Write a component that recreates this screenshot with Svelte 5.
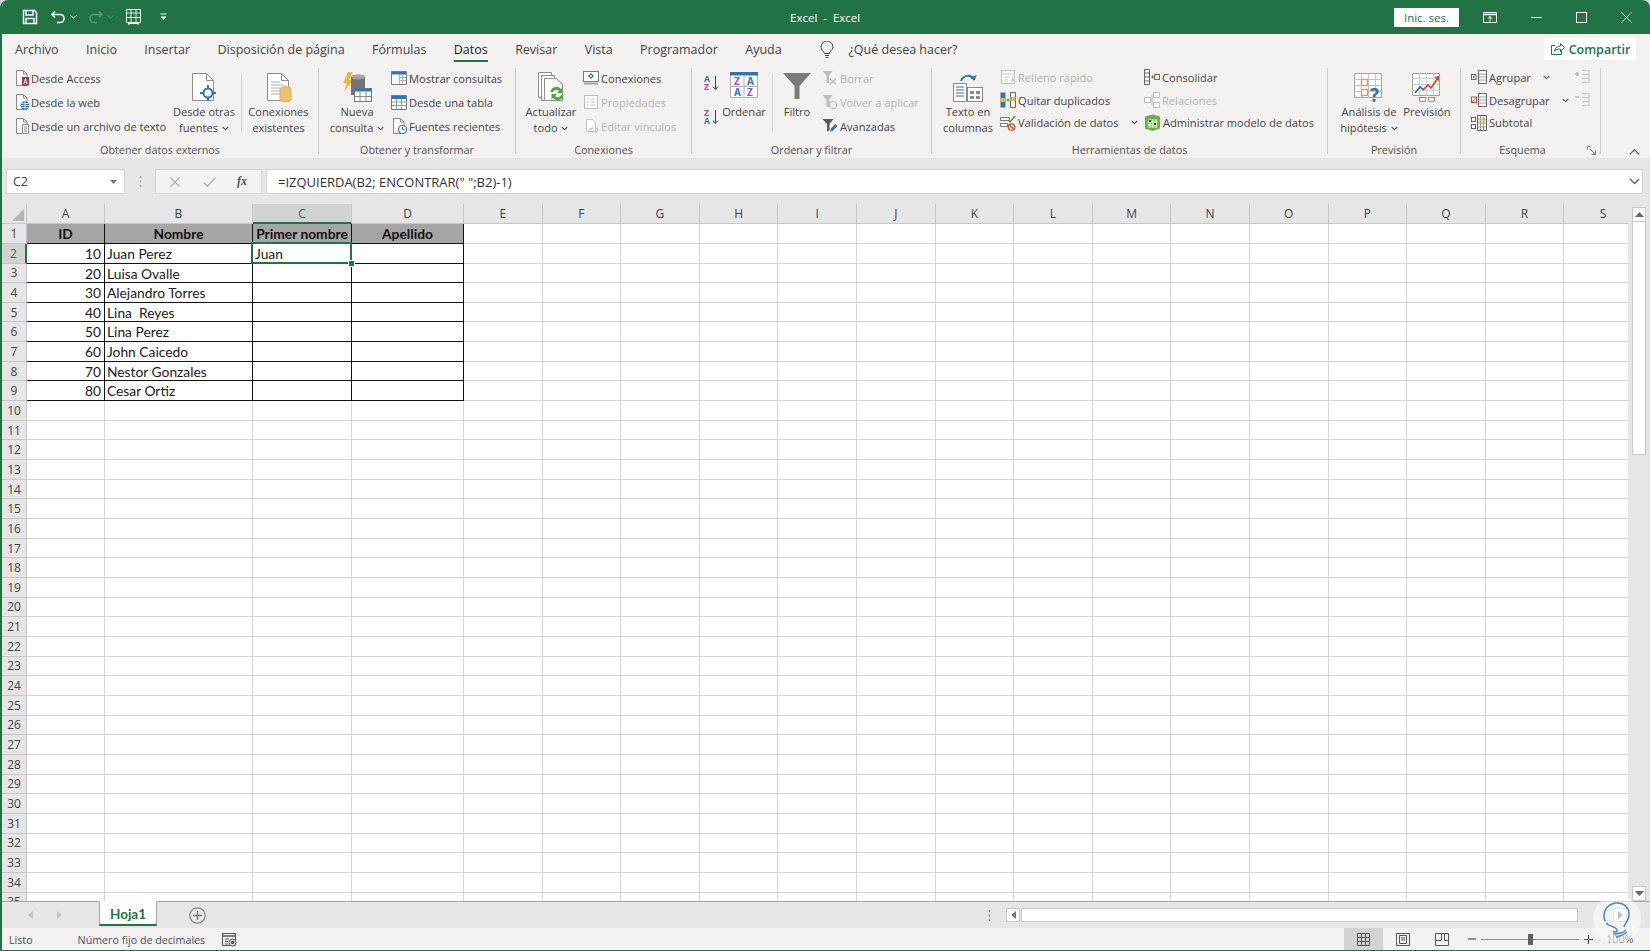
<script>
  const tabs = ['Archivo','Inicio','Insertar','Disposición de página','Fórmulas','Datos','Revisar','Vista','Programador','Ayuda'];
  const letters = 'ABCDEFGHIJKLMNOPQRS'.split('');
  const rows = Array.from({ length: 35 }, (_, i) => i + 1);
  const people = ['Juan Perez','Luisa Ovalle','Alejandro Torres','Lina  Reyes','Lina Perez','John Caicedo','Nestor Gonzales','Cesar Ortiz'];
  const headers = { A: 'ID', B: 'Nombre', C: 'Primer nombre', D: 'Apellido' };
  function text(c, r) {
    if (r === 1) return headers[c] ?? '';
    if (r > 9) return '';
    if (c === 'A') return String((r - 1) * 10);
    if (c === 'B') return people[r - 2];
    if (c === 'C' && r === 2) return 'Juan';
    return '';
  }
  const inTable = (c, r) => r <= 9 && 'ABCD'.includes(c);
</script>

{#snippet chev()}
  <svg class="chev" width="7" height="5" viewBox="0 0 7 5"><path d="M.7 1l2.8 2.6L6.3 1" fill="none" stroke="#555" stroke-width="1.1"/></svg>
{/snippet}
{#snippet doc()}
  <path d="M2.5.5h7l3.5 3.500v11.500H2.500z" fill="#fff" stroke="#8a8a8a"/><path d="M9.500.5V4H13" fill="none" stroke="#8a8a8a"/>
{/snippet}
{#snippet bigdoc()}
  <path d="M4.500 1.500h14l7 7v20h-21z" fill="#fff" stroke="#8f8f8f"/><path d="M18.500 1.500v7h7" fill="none" stroke="#8f8f8f"/>
{/snippet}

<div class="win">
  <header class="title">
    <div class="qat">
      <svg class="q1" width="16" height="16" viewBox="0 0 16 16"><path d="M1.500 1.500h11l2 2v11h-13z" fill="none" stroke="#fff" stroke-width="1.500"/><path d="M4 2v4h7V2M4 14V9.500h8V14" fill="none" stroke="#fff" stroke-width="1.400"/></svg>
      <svg class="q2" width="15" height="14" viewBox="0 0 15 14"><path d="M4 1.500 1 4.500l3 3" fill="none" stroke="#fff" stroke-width="1.600"/><path d="M1.500 4.500H9a4 4 0 0 1 0 8H6" fill="none" stroke="#fff" stroke-width="1.600"/></svg>
      <svg class="q3" width="7" height="4" viewBox="0 0 7 4"><path d="M.5.500l3 2.500 3-2.500" fill="none" stroke="#fff"/></svg>
      <svg class="q4" width="15" height="14" viewBox="0 0 15 14"><path d="M11 1.500l3 3-3 3" fill="none" stroke="#5d977a" stroke-width="1.600"/><path d="M13.500 4.500H6a4 4 0 0 0 0 8h3" fill="none" stroke="#5d977a" stroke-width="1.600"/></svg>
      <svg class="q3" width="7" height="4" viewBox="0 0 7 4"><path d="M.5.500l3 2.500 3-2.500" fill="none" stroke="#5d977a"/></svg>
      <svg class="q5" width="17" height="17" viewBox="0 0 17 17"><path d="M1.500.5h14v13h-14z" fill="none" stroke="#fff"/><path d="M1.500 4h14M6 .5v13M11 .5v13M1.500 8.500h14" stroke="#d9e7df" fill="none"/><path d="M3 14.500h11M3 14.500l2-1.500M3 14.500l2 1.500M14 14.500l-2-1.500M14 14.500l-2 1.500" stroke="#fff" fill="none"/></svg>
      <svg class="q6" width="7" height="8" viewBox="0 0 7 8"><path d="M.5 1h6" stroke="#fff"/><path d="M.5 3.500h6l-3 3.500z" fill="#fff"/></svg>
    </div>
    <div class="doc-title">Excel  -  Excel</div>
    <div class="signin">Inic. ses.</div>
    <svg class="w1" width="14" height="11" viewBox="0 0 14 11"><path d="M.5.500h13v10H.5z" fill="none" stroke="#fff"/><path d="M.5 2.500h13" stroke="#fff" stroke-width="1.500"/><path d="M7 9.500V4.500M5 6.500l2-2 2 2" fill="none" stroke="#fff"/></svg>
    <svg class="w2" width="11" height="11" viewBox="0 0 11 11"><path d="M0 5.500h11" stroke="#fff"/></svg>
    <svg class="w3" width="11" height="11" viewBox="0 0 11 11"><rect x=".5" y=".5" width="10" height="10" fill="none" stroke="#fff"/></svg>
    <svg class="w4" width="11" height="11" viewBox="0 0 11 11"><path d="M.5.500l10 10M10.500.5l-10 10" stroke="#fff"/></svg>
  </header>

  <nav class="tabs">
    {#each tabs as t}
      <span class="tab" class:active={t === 'Datos'}>{t}</span>
    {/each}
    <svg class="bulb" width="14" height="18" viewBox="0 0 14 18"><path d="M4.500 12.500C4 10 1 9 1 6a6 6 0 0 1 12 0c0 3-3 4-3.500 6.500z" fill="none" stroke="#444"/><path d="M5 14.500h4M5.500 16.500h3" stroke="#444"/></svg>
    <span class="ask">¿Qué desea hacer?</span>
    <div class="share">
      <svg width="15" height="14" viewBox="0 0 15 14"><path d="M5 3.500H1.500v9h10V9" fill="none" stroke="#217346"/><path d="M4.500 9c.5-3 3-5 6-5V1.500l4 4-4 4V7c-2.500 0-4.500.5-6 2z" fill="none" stroke="#217346"/></svg>
      Compartir
    </div>
  </nav>

  <section class="ribbon">
    <div class="grp g1">
      <div class="body">
        <div class="col c1">
          <div class="item"><svg width="16" height="16" viewBox="0 0 16 16">{@render doc()}<rect x="8" y="7" width="7" height="8.500" fill="#a4373a"/><path d="M9.800 14l1.700-5.500 1.700 5.500M10.500 12.300h2" stroke="#fff" fill="none" stroke-width=".9"/></svg>Desde Access</div>
          <div class="item"><svg width="16" height="16" viewBox="0 0 16 16">{@render doc()}<circle cx="11" cy="11.500" r="4.300" fill="#2e75b6"/><path d="M6.800 11.500h8.400M7.500 9.500h7M7.500 13.500h7M11 7.500v8" stroke="#fff" stroke-width=".7"/></svg>Desde la web</div>
          <div class="item"><svg width="16" height="16" viewBox="0 0 16 16">{@render doc()}<path d="M8.500 6.500h6v9h-6z" fill="#fff" stroke="#8a8a8a"/><path d="M10 9h3M10 11h3M10 13h3" stroke="#8a8a8a"/></svg>Desde un archivo de texto</div>
        </div>
        <div class="big b74">
          <svg width="32" height="32" viewBox="0 0 32 32">{@render bigdoc()}<circle cx="20" cy="21" r="4.500" fill="#fff" stroke="#2e75b6" stroke-width="2"/><path d="M20 13v4M20 25v4M12 21h4M24 21h4" stroke="#2e75b6" stroke-width="2"/></svg>
          <div class="lbl">Desde otras<br>fuentes {@render chev()}</div>
        </div>
        <i class="vsep"></i>
        <div class="big b73">
          <svg width="32" height="32" viewBox="0 0 32 32">{@render bigdoc()}<path d="M8 10h9M8 13h13M8 16h9M8 19h9M8 22h9" stroke="#b0b0b0"/><path d="M17 17c0-3 11-3 11 0v11c0 2-11 2-11 0z" fill="#eec16f" stroke="#e0ad54"/></svg>
          <div class="lbl">Conexiones<br>existentes</div>
        </div>
      </div>
      <div class="glabel">Obtener datos externos</div>
    </div>
    <i class="sep"></i>

    <div class="grp g2">
      <div class="body">
        <div class="big b60">
          <svg width="34" height="32" viewBox="0 0 34 32"><path d="M8 0 3 11h4l-3 9 9-12H9l4-8z" fill="#efb73e"/><path d="M11 5c0-3 14-3 14 0v18H11z" fill="#737373"/><ellipse cx="18" cy="5" rx="7" ry="2.500" fill="#a5a5a5"/><rect x="14.500" y="16.500" width="17" height="13" fill="#fff" stroke="#7a7a7a"/><path d="M14.500 16.500h17v3h-17z" fill="#2e75b6"/><path d="M20 20v9M26 20v9M15 24.500h16" stroke="#8a8a8a"/></svg>
          <div class="lbl">Nueva<br>consulta {@render chev()}</div>
        </div>
        <div class="col c2">
          <div class="item"><svg width="16" height="16" viewBox="0 0 16 16"><path d="M.5 1.500h15v13H.5z" fill="#fff" stroke="#7a7a7a"/><path d="M1 2h14v2.500H1z" fill="#2e75b6"/><path d="M8.500 5v9M11.500 5v9M9 7.500h6M9 10.500h6" stroke="#b0b0b0"/></svg>Mostrar consultas</div>
          <div class="item"><svg width="16" height="16" viewBox="0 0 16 16"><path d="M.5 1.500h15v14H.5z" fill="#fff" stroke="#7a7a7a"/><path d="M1 2h14v3H1z" fill="#2e75b6"/><path d="M5.500 5v10M10.500 5v10M1 8h14M1 11.500h14" stroke="#9a9a9a"/></svg>Desde una tabla</div>
          <div class="item"><svg width="16" height="16" viewBox="0 0 16 16">{@render doc()}<circle cx="11.500" cy="11.500" r="4" fill="#fff" stroke="#2e75b6" stroke-width="1.200"/><path d="M11.500 9v2.700h2" fill="none" stroke="#2e75b6"/></svg>Fuentes recientes</div>
        </div>
      </div>
      <div class="glabel">Obtener y transformar</div>
    </div>
    <i class="sep"></i>

    <div class="grp g3">
      <div class="body">
        <div class="big b60">
          <svg width="32" height="32" viewBox="0 0 32 32"><path d="M3.500.5h13v3h-10v22h-3z" fill="#fff" stroke="#8f8f8f"/><path d="M6.500 3.500h13v3h-10v22h-3z" fill="#fff" stroke="#8f8f8f"/><path d="M9.500 6.500h12l6 6v16h-18z" fill="#fff" stroke="#8f8f8f"/><path d="M15.500 20a6 6 0 0 1 10.500-3l1.500-1.500V21h-5.500l2-2a3.500 3.500 0 0 0-6 1z" fill="#4ea72e"/><path d="M28.500 23a6 6 0 0 1-10.500 3l-1.500 1.500V22H22l-2 2a3.500 3.500 0 0 0 6-1z" fill="#4ea72e"/></svg>
          <div class="lbl">Actualizar<br>todo {@render chev()}</div>
        </div>
        <div class="col c3">
          <div class="item"><svg width="16" height="16" viewBox="0 0 16 16"><rect x=".5" y="1.500" width="15" height="10" fill="#fff" stroke="#7a7a7a"/><path d="M8 3l3 3-3 3-3-3z" fill="#2e75b6"/><circle cx="8" cy="6" r="1" fill="#fff"/><path d="M1 12.500h14v2H1z" fill="#a0a0a0"/></svg>Conexiones</div>
          <div class="item off"><svg width="16" height="16" viewBox="0 0 16 16"><rect x="1.500" y="1.500" width="13" height="13" fill="#fff" stroke="#bdbdbd"/><path d="M4 5h2M8 5h4M4 8h2M8 8h4M4 11h2M8 11h4" stroke="#bdbdbd"/></svg>Propiedades</div>
          <div class="item off"><svg width="16" height="16" viewBox="0 0 16 16"><path d="M3.500 1.500h6l3 3v9h-9z" fill="#fff" stroke="#c4c4c4"/><path d="M7 12a2 2 0 0 1 2-2h1M15 12a2 2 0 0 0-2-2h-1M7 12a2 2 0 0 0 2 2h1M15 12a2 2 0 0 1-2 2h-1" fill="none" stroke="#b0b0b0"/></svg>Editar vínculos</div>
        </div>
      </div>
      <div class="glabel">Conexiones</div>
    </div>
    <i class="sep"></i>

    <div class="grp g4">
      <div class="body">
        <div class="sort">
          <svg width="18" height="18" viewBox="0 0 18 18"><text x="1" y="8" class="az blue">A</text><text x="1" y="16" class="az purple">Z</text><path d="M12.500 2v13M10 12.500l2.500 3 2.500-3" fill="none" stroke="#444"/></svg>
          <svg width="18" height="18" viewBox="0 0 18 18"><text x="1" y="8" class="az purple">Z</text><text x="1" y="16" class="az blue">A</text><path d="M12.500 2v13M10 12.500l2.500 3 2.500-3" fill="none" stroke="#444"/></svg>
        </div>
        <div class="big b44">
          <svg width="28" height="28" viewBox="0 0 28 28"><rect x=".5" y=".5" width="27" height="25" fill="#fff" stroke="#b0b0b0"/><path d="M0 0h28v3.500H0z" fill="#2e75b6"/><path d="M14 4v22M1 14.500h26" stroke="#b0b0b0"/><text x="4" y="13" class="az2 purple">Z</text><text x="17" y="13" class="az2 blue">A</text><text x="4" y="24" class="az2 blue">A</text><text x="17" y="24" class="az2 purple">Z</text></svg>
          <div class="lbl one">Ordenar</div>
        </div>
        <i class="vsep v2"></i>
        <div class="big b40">
          <svg width="28" height="28" viewBox="0 0 28 28"><path d="M0 1h28L16.500 14v13h-5V14z" fill="#7b7b7b"/></svg>
          <div class="lbl one">Filtro</div>
        </div>
        <div class="col c4">
          <div class="item off"><svg width="16" height="16" viewBox="0 0 16 16"><path d="M.5 1h10L7 6v7H4.500V6z" fill="#bdbdbd"/><path d="M8 8.500l6 6M14 8.500l-6 6" stroke="#bdbdbd" stroke-width="1.200"/></svg>Borrar</div>
          <div class="item off"><svg width="16" height="16" viewBox="0 0 16 16"><path d="M.5 1h10L7 6v7H4.500V6z" fill="#bdbdbd"/><circle cx="11" cy="11" r="3.500" fill="none" stroke="#bdbdbd" stroke-width="1.200"/></svg>Volver a aplicar</div>
          <div class="item"><svg width="16" height="16" viewBox="0 0 16 16"><path d="M.5 1h11L7.500 6v7H5V6z" fill="#5a5a5a"/><path d="M8 14l1-3.500 4.500-4.500 2 2-4.500 4.500z" fill="#2e75b6"/></svg>Avanzadas</div>
        </div>
      </div>
      <div class="glabel">Ordenar y filtrar</div>
    </div>
    <i class="sep"></i>

    <div class="grp g5">
      <div class="body">
        <div class="big b64">
          <svg width="32" height="32" viewBox="0 0 32 32"><path d="M9 9c2-6 10-7 13-2" fill="none" stroke="#2e75b6" stroke-width="2"/><path d="M18 6.500l5 2 1-6z" fill="#2e75b6" transform="rotate(10 22 6)"/><path d="M1.500 11.500h13v18h-13z" fill="#fff" stroke="#8a8a8a"/><path d="M4 15h8M4 18h8M4 21h8M4 24h8" stroke="#2e75b6" stroke-width="1.200"/><rect x="15.500" y="15.500" width="15" height="14" fill="#fff" stroke="#8a8a8a"/><path d="M18 19h4v3h-4zM24 19h4v3h-4zM18 24h4v3h-4zM24 24h4v3h-4z" fill="#8a8a8a"/></svg>
          <div class="lbl">Texto en<br>columnas</div>
        </div>
        <div class="col tight c5">
          <div class="item off"><svg width="16" height="16" viewBox="0 0 16 16"><rect x="1.500" y="1.500" width="13" height="13" fill="#fff" stroke="#c4c4c4"/><path d="M1.500 5h13M4 8h6M4 11h4" stroke="#c4c4c4"/><path d="M12 7l3 4-4 3z" fill="#c9c9c9"/></svg>Relleno rápido</div>
          <div class="item"><svg width="16" height="16" viewBox="0 0 16 16"><path d="M.5.500h5v15h-5z" fill="#2e75b6"/><path d="M10.500.5h5v15h-5z" fill="#fff" stroke="#666"/><path d="M.5 6h5v4h-5zM10.500 5h5v4h-5z" fill="#efb73e"/><path d="M6.500 8h3M8 6.500v3" stroke="#2e75b6"/></svg>Quitar duplicados</div>
          <div class="item"><svg width="16" height="16" viewBox="0 0 16 16"><path d="M.5 2.500h9v3h-9zM.5 8.500h7v3h-7z" fill="#fff" stroke="#7a7a7a"/><path d="M8 5l2 2 5-6" fill="none" stroke="#4ea72e" stroke-width="1.500"/><circle cx="11.500" cy="12" r="3.200" fill="#fff" stroke="#d24726" stroke-width="1.300"/><path d="M9.500 10l4 4" stroke="#d24726" stroke-width="1.200"/></svg>Validación de datos<span class="gapchev">{@render chev()}</span></div>
        </div>
        <div class="col tight c6">
          <div class="item"><svg width="16" height="16" viewBox="0 0 16 16"><path d="M.5.500h5v15h-5z" fill="#fff" stroke="#666"/><path d="M.5 4h5M.5 8h5M.5 12h5" stroke="#666"/><path d="M7 8h3M8.500 6.500v3" stroke="#2e75b6"/><rect x="10.500" y="5.500" width="5" height="5" fill="#fff" stroke="#d24726"/></svg>Consolidar</div>
          <div class="item off"><svg width="16" height="16" viewBox="0 0 16 16"><rect x=".5" y="5.500" width="6" height="5" fill="#fff" stroke="#bdbdbd"/><rect x="9.500" y=".5" width="6" height="5" fill="#fff" stroke="#bdbdbd"/><rect x="9.500" y="10.500" width="6" height="5" fill="#fff" stroke="#bdbdbd"/><path d="M6.500 8h3M8 3v10" stroke="#bdbdbd"/></svg>Relaciones</div>
          <div class="item"><svg width="17" height="17" viewBox="0 0 17 17"><path d="M1 2.500 8.500.5 16 2.500v12l-7.500 2.500L1 14.500z" fill="#70ad47"/><path d="M3.500 5h10v9h-10z" fill="#fff" fill-opacity=".25"/><path d="M6 5v9M9 5v9M12 5v9M4 8h9M4 11h9" stroke="#fff" stroke-width=".8"/><path d="M5 6h2v2H5zM10 9h2v2h-2z" fill="#1e6b3c"/></svg>Administrar modelo de datos</div>
        </div>
      </div>
      <div class="glabel">Herramientas de datos</div>
    </div>
    <i class="sep"></i>

    <div class="grp g6">
      <div class="body">
        <div class="big b76">
          <svg width="30" height="32" viewBox="0 0 30 32"><path d="M.5 1.500h27v24H.5z" fill="#fff" stroke="#a0a0a0"/><path d="M.5 7.500h27M.5 13.500h27M.5 19.500h27M7.500 1.500v24M14.500 1.500v24M21.500 1.500v24" stroke="#c4c4c4" fill="none"/><rect x="7.500" y="7.500" width="6" height="6" fill="#fff" stroke="#ed9a3a" stroke-width="1.300"/><rect x="7.500" y="17.500" width="6" height="6" fill="#fff" stroke="#ed9a3a" stroke-width="1.300"/><text x="16" y="30" class="q">?</text></svg>
          <div class="lbl">Análisis de<br>hipótesis {@render chev()}</div>
        </div>
        <div class="big b40">
          <svg width="30" height="32" viewBox="0 0 30 32"><path d="M.5 1.500h27v22H.5z" fill="#fff" stroke="#a0a0a0"/><path d="M.5 6.500h27M.5 12.500h27M.5 18.500h27M7.500 1.500v22M14.500 1.500v22M21.500 1.500v22" stroke="#d0d0d0" fill="none"/><path d="M3 21l5-6 4 3" fill="none" stroke="#2e75b6" stroke-width="1.700"/><path d="M11 18l5-5 3 3 7-10" fill="none" stroke="#d24726" stroke-width="1.700"/><path d="M22 5l5-1v5z" fill="#d24726"/><path d="M7 25.500h7l-1 4H8zM16 25.500h7l-1 4h-5z" fill="#fff" stroke="#8a8a8a"/></svg>
          <div class="lbl">Previsión</div>
        </div>
      </div>
      <div class="glabel">Previsión</div>
    </div>
    <i class="sep"></i>

    <div class="grp g7">
      <div class="body">
        <div class="col tight c7">
          <div class="item"><svg width="16" height="16" viewBox="0 0 16 16"><rect x=".5" y="5.500" width="4.500" height="5" fill="#fff" stroke="#666"/><path d="M1.500 8h2.500M2.750 6.800v2.400" stroke="#2e75b6" stroke-width=".8"/><path d="M7.500 1.500h8v13h-8z" fill="#fff" stroke="#666"/><path d="M8 5h7M8 8h7M8 11h7" stroke="#7aa5cc"/></svg>Agrupar<span class="c-a">{@render chev()}</span></div>
          <div class="item"><svg width="16" height="16" viewBox="0 0 16 16"><rect x=".5" y="5" width="5" height="5.500" fill="#fff" stroke="#d24726"/><path d="M.5 10.500l5-5.500" stroke="#d24726"/><path d="M7.500 1.500h8v13h-8z" fill="#fff" stroke="#666"/><path d="M8 5h7M8 8h7M8 11h7" stroke="#7aa5cc"/></svg>Desagrupar<span class="c-a">{@render chev()}</span></div>
          <div class="item"><svg width="16" height="16" viewBox="0 0 16 16"><rect x=".5" y="2.500" width="4" height="4" fill="#fff" stroke="#666"/><rect x=".5" y="9.500" width="4" height="4" fill="#fff" stroke="#666"/><path d="M6.500.5h9v15h-9z" fill="#fff" stroke="#666"/><path d="M9.500 1v14M12.500 1v14M7 4h8M7 8h8M7 12h8" stroke="#999"/><path d="M7 4.500h8v3H7z" fill="#efb73e" fill-opacity=".5"/></svg>Subtotal</div>
        </div>
        <div class="detail">
          <svg width="15" height="16" viewBox="0 0 15 16"><path d="M0 5h4M2 3v4" stroke="#b5b5b5" stroke-width="1.500"/><path d="M7 1.500h7M7 5.500h7M7 9.500h7M7 13.500h7" stroke="#c4c4c4"/><path d="M14 1v13" stroke="#c4c4c4"/></svg>
          <svg width="15" height="16" viewBox="0 0 15 16"><path d="M0 5h4" stroke="#b5b5b5" stroke-width="1.500"/><path d="M7 1.500h7M7 5.500h7M7 9.500h7M7 13.500h7" stroke="#c4c4c4"/><path d="M14 1v13" stroke="#c4c4c4"/></svg>
        </div>
      </div>
      <div class="glabel lastlabel">Esquema
        <svg class="launch" width="9" height="9" viewBox="0 0 9 9"><path d="M.5 3.500v-3h3M3 3l5 5M4.500 8.500h4v-4" fill="none" stroke="#777"/></svg>
      </div>
    </div>
    <i class="sep"></i>
    <svg class="collapse" width="11" height="6" viewBox="0 0 11 6"><path d="M.7 5.300 5.500.8l4.800 4.500" fill="none" stroke="#555" stroke-width="1.100"/></svg>
  </section>

  <section class="fbar">
    <div class="namebox"><span>C2</span><svg width="7" height="4" viewBox="0 0 7 4"><path d="M0 0h7L3.500 4z" fill="#777"/></svg></div>
    <svg class="dots" width="3" height="11" viewBox="0 0 3 11"><path d="M1.500 0v2M1.500 4.500v2M1.500 9v2" stroke="#aaa" stroke-width="1.500"/></svg>
    <div class="fxbox">
      <svg width="10" height="10" viewBox="0 0 10 10"><path d="M.5.500l9 9M9.500.5l-9 9" stroke="#b0b0b0" stroke-width="1.200"/></svg>
      <svg width="13" height="10" viewBox="0 0 13 10"><path d="M.7 5.500l3.800 3.800L12.300.7" fill="none" stroke="#b0b0b0" stroke-width="1.400"/></svg>
      <span class="fx">fx</span>
    </div>
    <div class="finput"><span>=IZQUIERDA(B2; ENCONTRAR(" ";B2)-1)</span><svg width="11" height="7" viewBox="0 0 11 7"><path d="M1 1l4.500 4.500L10 1" fill="none" stroke="#666" stroke-width="1.500"/></svg></div>
  </section>

  <main class="sheet">
    <div class="gridclip">
      <div class="grid">
        <div class="corner"><svg width="12" height="12" viewBox="0 0 12 12"><path d="M12 0v12H0z" fill="#b5b5b5"/></svg></div>
        {#each letters as c}
          <div class="ch" class:sel={c === 'C'}>{c}</div>
        {/each}
        {#each rows as r}
          <div class="rh" class:sel={r === 2}>{r}</div>
          {#each letters as c}
            <div class="cell" class:t={inTable(c, r)} class:head={inTable(c, r) && r === 1} class:num={c === 'A' && r > 1}>{text(c, r)}{#if c === 'C' && r === 2}<i class="cursor"></i><i class="handle"></i>{/if}</div>
          {/each}
        {/each}
      </div>
    </div>
    <aside class="vbar">
      <div class="sbtn"><svg width="9" height="5" viewBox="0 0 9 5"><path d="M4.500 0 9 5H0z" fill="#666"/></svg></div>
      <div class="vthumb"></div>
      <div class="vspace"></div>
      <div class="sbtn"><svg width="9" height="5" viewBox="0 0 9 5"><path d="M0 0h9L4.500 5z" fill="#666"/></svg></div>
    </aside>
  </main>

  <section class="tabbar">
    <svg class="nav" width="5" height="8" viewBox="0 0 5 8"><path d="M5 0v8L0 4z" fill="#c4c4c4"/></svg>
    <svg class="nav n2" width="5" height="8" viewBox="0 0 5 8"><path d="M0 0v8l5-4z" fill="#c4c4c4"/></svg>
    <div class="sheettab">Hoja1</div>
    <svg class="add" width="17" height="17" viewBox="0 0 17 17"><circle cx="8.500" cy="8.500" r="7.700" fill="none" stroke="#8a8a8a" stroke-width="1.300"/><path d="M8.500 4v9M4 8.500h9" stroke="#777" stroke-width="1.300"/></svg>
    <svg class="tdots" width="3" height="11" viewBox="0 0 3 11"><path d="M1.500 0v2M1.500 4.500v2M1.500 9v2" stroke="#888" stroke-width="1.500"/></svg>
    <div class="hbtn"><svg width="5" height="8" viewBox="0 0 5 8"><path d="M5 0v8L0 4z" fill="#777"/></svg></div>
    <div class="hthumb"></div>
    <div class="hbtn right"><svg width="5" height="8" viewBox="0 0 5 8"><path d="M0 0v8l5-4z" fill="#777"/></svg></div>
  </section>

  <footer class="status">
    <span class="listo">Listo</span>
    <span class="fixed">Número fijo de decimales</span>
    <svg class="macro" width="15" height="14" viewBox="0 0 15 14"><path d="M.5.500h13v12H.5z" fill="none" stroke="#555"/><path d="M1 3h12" stroke="#555" stroke-width="1.500"/><path d="M3 6h4M3 8.500h3M3 11h3" stroke="#555"/><circle cx="10.500" cy="9.500" r="3.500" fill="#f3f2f1" stroke="#555"/><circle cx="10.500" cy="9.500" r="1.800" fill="#555"/></svg>
    <div class="view on"><svg width="13" height="13" viewBox="0 0 13 13"><path d="M.5.500h12v12H.5zM4.500.5v12M8.500.5v12M.5 4.500h12M.5 8.500h12" fill="none" stroke="#555"/></svg></div>
    <div class="view"><svg width="14" height="13" viewBox="0 0 14 13"><path d="M.5.500h13v12H.5z" fill="none" stroke="#555"/><path d="M3.500 2.500h7v8h-7z" fill="none" stroke="#555"/><path d="M5 5h4M5 7h4" stroke="#555"/></svg></div>
    <div class="view"><svg width="14" height="13" viewBox="0 0 14 13"><path d="M.5.500h13v12H.5zM.5 7.500h6V.5M9.500.5v7h4" fill="none" stroke="#555"/></svg></div>
    <div class="zoom">
      <svg width="8" height="2" viewBox="0 0 8 2"><path d="M0 1h8" stroke="#555" stroke-width="1.300"/></svg>
      <div class="slider"><i></i></div>
      <svg width="9" height="9" viewBox="0 0 9 9"><path d="M0 4.500h9M4.500 0v9" stroke="#555" stroke-width="1.200"/></svg>
      <span class="pct">100%</span>
    </div>
  </footer>

  <svg class="mark" width="54" height="54" viewBox="0 0 54 54"><circle cx="27" cy="25" r="24" fill="#fff" fill-opacity=".55"/><path d="M15 27c-3-8 1-16 10-18 9-1 15 5 14 13-1 5-4 7-5 11M16 29c3 4 10 3 11 7 1 3-3 2-4 1M23 40c5 0 10-1 13-4M26 43c4-1 8-2 11-5" fill="none" stroke="#4c86c6" stroke-width="1.500"/></svg>
</div>

<style>
  :global(body) { margin: 0; background: #d9d9d9; }
  .win {
    position: relative; width: 1650px; height: 951px; box-sizing: border-box; overflow: hidden;
    border-left: 2px solid #217346; border-bottom: 1px solid #217346; border-radius: 8px 8px 0 0;
    background: #f3f2f1; font: 12px "Open Sans", sans-serif; color: #444; display: flex; flex-direction: column;
  }
  svg { display: block; flex: none; }

  .title { height: 34px; flex: none; margin-left: -2px; padding-left: 2px; background: #217346; display: flex; align-items: center; color: #fff; }
  .qat { display: flex; align-items: center; width: 170px; padding-left: 20px; box-sizing: border-box; }
  .q2 { margin-left: 13px; } .q3 { margin-left: 4px; } .q4 { margin-left: 11px; } .q5 { margin-left: 11px; } .q6 { margin-left: 18px; }
  .doc-title { margin-left: 618px; width: 70px; white-space: pre; font-size: 11.500px; text-align: center; }
  .signin { margin-left: 534px; width: 65px; height: 19px; background: #fff; color: #217346; font-size: 11.500px; line-height: 19px; text-align: center; }
  .w1 { margin-left: 24px; } .w2 { margin-left: 34px; } .w3 { margin-left: 34px; } .w4 { margin-left: 34px; }

  .tabs { height: 28px; flex: none; display: flex; align-items: flex-start; padding-left: 13px; gap: 27.400px; font-size: 12.500px; position: relative; }
  .tab { height: 28px; box-sizing: border-box; padding-top: 4px; line-height: 24px; position: relative; white-space: nowrap; }
  .tab.active { color: #262626; }
  .tab.active::after { content: ''; position: absolute; left: 0; right: 0; bottom: 0; height: 2px; background: #217346; }
  .bulb { margin: 7px 0 0 11px; }
  .ask { margin-left: -13px; padding-top: 4px; line-height: 24px; white-space: nowrap; }
  .share { margin: 4px 14px 0 auto; width: 92px; height: 22px; background: #fff; color: #217346; font-weight: 600; font-size: 12.500px; display: flex; align-items: center; justify-content: center; gap: 4px; border-radius: 2px; }

  .ribbon { height: 96px; flex: none; display: flex; position: relative; }
  .sep { width: 1px; height: 86px; margin-top: 6px; background: #c8c8c8; flex: none; }
  .grp { display: flex; flex-direction: column; flex: none; }
  .body { height: 80px; display: flex; }
  .glabel { height: 16px; line-height: 16px; text-align: center; font-size: 10.800px; color: #505050; position: relative; }
  .lastlabel { padding-right: 16px; }
  .launch { position: absolute; right: 4px; top: 4px; }
  .g1 { width: 316px; } .g2 { width: 196px; } .g3 { width: 175px; } .g4 { width: 239px; } .g5 { width: 395px; } .g6 { width: 132px; } .g7 { width: 139px; }
  .g1 .body { padding-left: 12px; } .g2 .body { padding-left: 8px; } .g3 .body { padding-left: 5px; }
  .g4 .body { padding-left: 11px; } .g5 .body { padding-left: 4px; } .g6 .body { padding-left: 3px; } .g7 .body { padding-left: 10px; }

  .col { padding-top: 4px; flex: none; }
  .col.tight { padding-top: 4px; }
  .item { height: 24px; display: flex; align-items: center; gap: 2px; white-space: nowrap; font-size: 11.100px; }
  .c1 .item { gap: 1px; }
  .tight .item { height: 22.800px; }
  .off { color: #b3b3b3; }
  .c1 { width: 153px; } .c2 { margin-left: 4px; } .c3 { margin-left: 2px; } .c4 { margin-left: 5px; }
  .c5 { width: 144px; } .c7 { width: 104px; }
  .gapchev { margin-left: 10px; }
  .c-a { margin-left: 10px; }

  .big { display: flex; flex-direction: column; align-items: center; padding-top: 10px; flex: none; box-sizing: border-box; }
  .big svg:first-child { height: 32px; }
  .lbl { line-height: 16px; text-align: center; font-size: 11.100px; white-space: nowrap; margin-top: 0; }
  .lbl .chev { display: inline-block; vertical-align: 1px; margin-left: 1px; }
  .b74 { width: 74px; } .b73 { width: 73px; } .b60 { width: 60px; } .b44 { width: 44px; margin-left: 1px; } .b40 { width: 40px; } .b64 { width: 64px; } .b76 { width: 76px; }
  .b44 svg:first-child, .g4 .b40 svg:first-child { height: 28px; margin-bottom: 4px; }
  .vsep { width: 1px; height: 58px; margin-top: 12px; background: #d4d4d4; flex: none; }
  .v2 { margin-left: 6px; margin-right: 4px; }
  .sort { width: 18px; padding-top: 12px; display: flex; flex-direction: column; gap: 16px; flex: none; }
  .az { font: 700 8.500px "Open Sans", sans-serif; }
  .az2 { font: 700 10px "Open Sans", sans-serif; }
  .blue { fill: #2e75b6; } .purple { fill: #9c4fb8; }
  .q { font: 700 19px "Open Sans", sans-serif; fill: #2e75b6; }
  .detail { padding-top: 7px; display: flex; flex-direction: column; gap: 7px; }
  .collapse { align-self: flex-end; margin: 0 0 3px 28px; }

  .fbar { height: 46px; flex: none; background: #e6e6e6; display: flex; align-items: flex-start; padding-top: 11px; box-sizing: border-box; }
  .namebox { margin-left: 4px; width: 119px; height: 25px; box-sizing: border-box; background: #fff; border: 1px solid #d4d4d4; display: flex; align-items: center; justify-content: space-between; padding: 0 7px 0 6px; font-size: 12.500px; }
  .dots { margin: 7px 0 0 14px; }
  .fxbox { margin-left: 13px; width: 107px; height: 25px; box-sizing: border-box; background: #f3f3f3; border: 1px solid #d4d4d4; display: flex; align-items: center; padding-left: 14px; gap: 23px; }
  .fx { font: italic 600 12px "Liberation Serif", serif; color: #555; margin-left: -2px; }
  .finput { margin-left: 4px; width: 1377px; height: 25px; box-sizing: border-box; background: #fff; border: 1px solid #d4d4d4; display: flex; align-items: center; justify-content: space-between; padding: 0 2px 0 11px; font-size: 13px; color: #333; white-space: pre; }

  .sheet { flex: 1; min-height: 0; display: flex; background: #e6e6e6; }
  .gridclip { width: 1626px; overflow: hidden; background: #fff; flex: none; }
  .grid { display: grid; grid-template-columns: 25px 78px 148px 99px 112px repeat(15, 78.600px); grid-template-rows: 20.200px; grid-auto-rows: 19.670px; width: max-content; }
  .corner { background: #e6e6e6; border-right: 1px solid #c6c6c6; border-bottom: 1px solid #c6c6c6; box-sizing: border-box; display: flex; justify-content: flex-end; align-items: flex-end; padding: 0 2px 2px 0; }
  .ch, .rh { background: #e6e6e6; box-sizing: border-box; display: flex; align-items: center; justify-content: center; font-size: 12px; color: #444; border-right: 1px solid #c6c6c6; border-bottom: 1px solid #c6c6c6; }
  .ch.sel { background: #d2d2d2; color: #217346; border-bottom: 2px solid #217346; }
  .rh.sel { background: #d2d2d2; color: #217346; border-right: 2px solid #217346; }
  .cell { box-sizing: border-box; border-right: 1px solid #d4d4d4; border-bottom: 1px solid #d4d4d4; font: 13.800px/19px Lato, sans-serif; color: #1a1a1a; padding-left: 2px; white-space: pre; position: relative; }
  .cell.t { border-right-color: #111; border-bottom-color: #111; }
  .cell.head { background: #a5a5a5; font-weight: 700; text-align: center; padding-left: 0; color: #111; }
  .cell.num { text-align: right; padding: 0 3px 0 0; }
  .cursor { position: absolute; inset: -2px -1px -1px -2px; border: 2px solid #217346; pointer-events: none; }
  .handle { position: absolute; right: -4px; bottom: -4px; width: 5px; height: 5px; background: #217346; border: 1px solid #fff; z-index: 2; }

  .vbar { flex: 1; padding: 3px 4px 0; box-sizing: border-box; display: flex; flex-direction: column; }
  .sbtn { height: 13px; flex: none; background: #fff; border: 1px solid #c9c9c9; display: flex; align-items: center; justify-content: center; }
  .vthumb { height: 233px; flex: none; background: #fff; border: 1px solid #c9c9c9; border-top: 0; box-sizing: border-box; }
  .vspace { flex: 1; }

  .tabbar { height: 27px; flex: none; background: #e6e6e6; border-top: 1px solid #a6a6a6; box-sizing: border-box; display: flex; align-items: center; position: relative; }
  .nav { margin-left: 26px; }
  .n2 { margin-left: 24px; }
  .sheettab { align-self: flex-start; margin: -1px 0 0 37px; width: 58px; height: 25px; box-sizing: border-box; background: #fff; border: 1px solid #a6a6a6; border-top-color: #fff; border-bottom: 2px solid #217346; color: #217346; font: 700 13.500px/24px Lato, sans-serif; text-align: center; }
  .add { margin-left: 32px; }
  .tdots { margin-left: 782px; }
  .hbtn { margin-left: 15px; width: 14px; height: 14px; box-sizing: border-box; background: #fff; border: 1px solid #c9c9c9; display: flex; align-items: center; justify-content: center; }
  .hthumb { margin-left: 1px; width: 557px; height: 14px; background: #fff; border: 1px solid #c9c9c9; box-sizing: border-box; }
  .hbtn.right { margin-left: 35px; }

  .status { height: 22px; flex: none; display: flex; align-items: center; font-size: 10.700px; color: #505050; }
  .listo { margin: 1px 0 0 7px; }
  .fixed { margin: 1px 0 0 45px; }
  .macro { margin: 1px 0 0 17px; }
  .view { width: 39px; height: 100%; display: flex; align-items: center; justify-content: center; }
  .view.on { margin-left: 1107px; background: #d2d2d2; }
  .zoom { display: flex; align-items: center; margin-left: 7px; }
  .slider { width: 98px; height: 1px; background: #8a8a8a; margin: 0 5px; position: relative; }
  .slider i { position: absolute; left: 47px; top: -5px; width: 5px; height: 11px; background: #5f5f5f; }
  .pct { margin-left: 13px; }
  .mark { position: absolute; right: 6px; bottom: 2px; }
</style>
